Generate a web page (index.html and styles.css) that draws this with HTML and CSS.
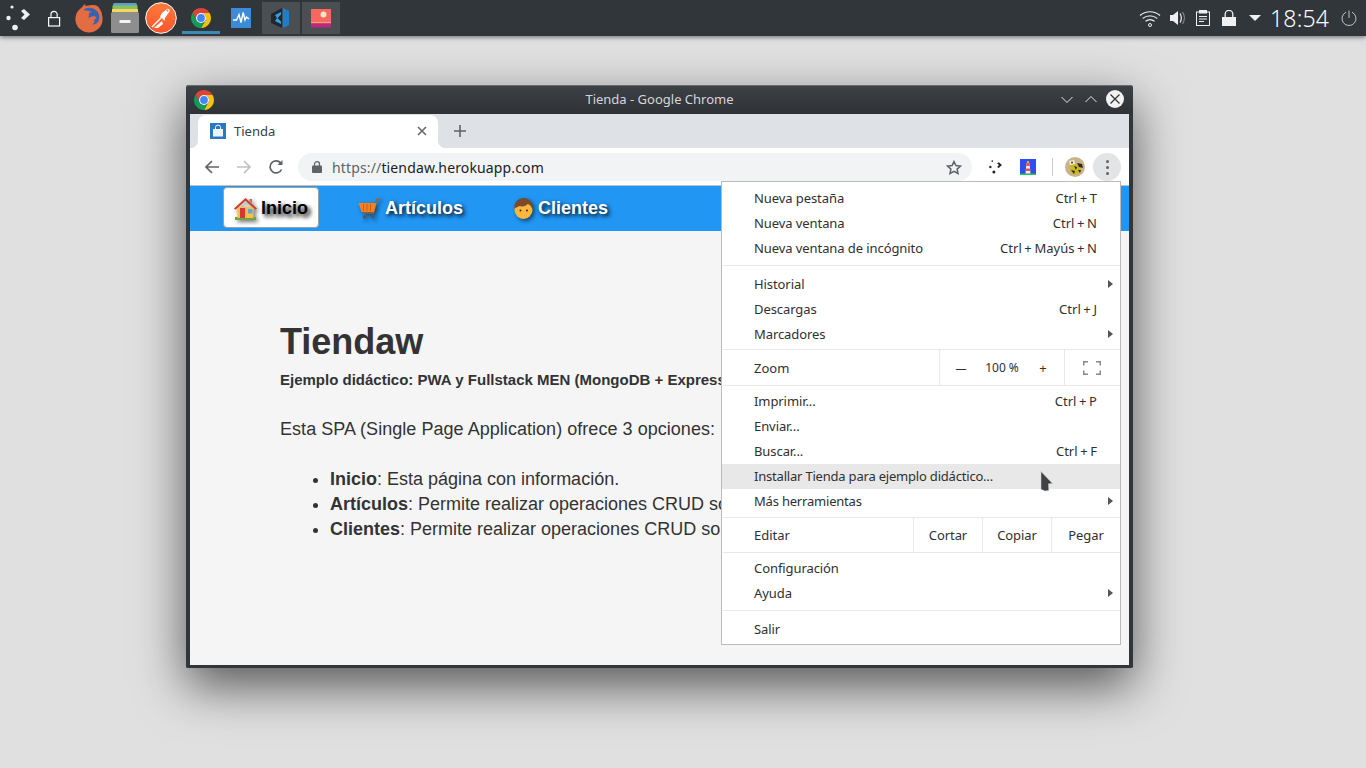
FILE: index.html
```html
<!DOCTYPE html>
<html lang="es">
<head>
<meta charset="utf-8">
<title>Tienda - Google Chrome</title>
<link rel="stylesheet" href="styles.css">
</head>
<body>
<svg class="defs" width="0" height="0" aria-hidden="true">
  <symbol id="chrome" viewBox="0 0 20 20">
    <path fill="#db4437" d="M1.34 5A10 10 0 0 1 18.66 5H10A5 5 0 0 0 5.67 12.5Z"/>
    <path fill="#f4c20d" d="M18.66 5A10 10 0 0 1 10 20L14.33 12.5A5 5 0 0 0 10 5Z"/>
    <path fill="#0f9d58" d="M10 20A10 10 0 0 1 1.34 5L5.67 12.5A5 5 0 0 0 14.33 12.5Z"/>
    <circle cx="10" cy="10" r="5" fill="#fff"/>
    <circle cx="10" cy="10" r="3.9" fill="#4285f4"/>
  </symbol>
  <symbol id="dots" viewBox="0 0 24 26">
    <circle cx="6" cy="2" r="1.600"/>
    <circle cx="2.500" cy="13" r="2.200"/>
    <circle cx="9" cy="22.500" r="2.800"/>
    <path d="M15 6l3-2 6 5.500-6 5.500-3-2 3.500-3.500z"/>
  </symbol>
</svg>

<header class="panel">
  <span class="launcher"><svg width="24" height="26" fill="#eff0f1"><use href="#dots"/></svg></span>
  <span class="slot s36"><svg width="14" height="17" viewBox="0 0 14 17" fill="none" stroke="#fcfcfc" stroke-width="1.2"><rect x="1.6" y="7.6" width="11" height="8.4"/><path d="M4 7.5V4.5a3 3 0 0 1 6.2 0V7.5"/></svg></span>
  <span class="slot s34"><svg width="30" height="30" viewBox="0 0 30 30">
    <circle cx="15" cy="16" r="13.6" fill="#e46c42"/>
    <path fill="#e46c42" d="M7 6C9 3 10 1.500 11 1c0 2 1 3 2 3 2-2 7-3 11-.5 2 2 3.500 5 4 8L17 8z"/>
    <path fill="#3b62ad" d="M9.500 7C13 3.500 19 4 23 8c2 2.500 3 6 2 9-1 3-4 5-7 4.500 1.500-1 3-3 2.200-5-2 .5-4 .8-5.700-.4-1-.8-.7-1.800.2-2.300L15 11.500c-.6-1.600 1-2 2.500-2.500-2-1.200-5.500-1.200-8 -2z"/>
    <path fill="#e46c42" d="M18 13.500c1.800-.4 3.500-.2 4.400 1-1 2.200-3.600 3-6 2.400-1.800-.5-3-1.600-3.400-3 1.600 1 3.500.7 5-.4z"/>
  </svg></span>
  <span class="slot s38"><svg width="28" height="30" viewBox="0 0 28 30">
    <rect x="2" y="0" width="24" height="5" rx="1.500" fill="#5a9fd0"/>
    <rect x="1.500" y="2.500" width="25" height="4" fill="#8cc05a"/>
    <rect x="1" y="6" width="26" height="6" fill="#f3d664"/>
    <rect x="0" y="9" width="28" height="21" rx="1.500" fill="#8e8e8e"/>
    <rect x="8.500" y="17" width="11" height="3" rx=".5" fill="#f2f2f2"/>
  </svg></span>
  <span class="slot s34"><svg width="32" height="32" viewBox="0 0 32 32">
    <defs><linearGradient id="pm" x1="0" y1="0" x2="0" y2="1"><stop offset="0" stop-color="#ff7a3c"/><stop offset="1" stop-color="#f9562a"/></linearGradient></defs>
    <circle cx="16" cy="16" r="15.300" fill="url(#pm)" stroke="#fff" stroke-width="1"/>
    <path d="M7 25L18 14" stroke="#fff" stroke-width="1.500" fill="none"/>
    <path d="M9 26l8-7 1 3-5 4z" fill="#fff"/>
    <path d="M17 11l5-4c1.500-1 3.500 1 2.500 2.500L20 16l-.5 3-2-2.500-2.500-2z" fill="#fff"/>
    <circle cx="22.500" cy="8.500" r="1" fill="#ff6c37"/>
  </svg></span>
  <span class="task current"><svg width="20" height="20"><use href="#chrome"/></svg></span>
  <span class="task"><svg width="20" height="20" viewBox="0 0 20 20"><rect width="20" height="20" fill="#3f8ad8"/><path d="M2 12h3.500L8 6.500l2 8 2.200-10L14 12l1.500-3 2.500 2" fill="none" stroke="#fff" stroke-width="1.400"/></svg></span>
  <span class="task open"><svg width="20" height="20" viewBox="0 0 20 20"><path fill="#23272b" d="M0 6L11 0v20L0 15z"/><path fill="#1b7fcf" d="M12 0l6 3v14l-6 3z"/><path fill="#2ea2e8" d="M4 7l6-3v2.500L6.500 10l3.500 3.500V16l-6-3 2-3z"/></svg></span>
  <span class="task open"><svg width="20" height="20" viewBox="0 0 20 20"><rect width="20" height="13" y="1" fill="#f9675f"/><circle cx="12.500" cy="6.500" r="3" fill="#fde3c8"/><rect y="14" width="20" height="1.500" fill="#f7a27a"/><rect y="15.500" width="20" height="4" fill="#c2247f"/></svg></span>
  <div class="tray">
    <svg class="t-wifi" width="22" height="17" viewBox="0 0 22 17" fill="none" stroke="#eff0f1" stroke-width="1.200"><path d="M1 5.500c5.500-5 14.500-5 20 0"/><path d="M3.700 8.500c4-3.500 10.600-3.500 14.600 0" opacity=".85"/><path d="M6.500 11.300c2.600-2 6.400-2 9 0"/><circle cx="11" cy="15" r="1.500" stroke-width="1"/></svg>
    <svg class="t-vol" width="16" height="16" viewBox="0 0 16 16"><path fill="#eff0f1" d="M0 5h3l5-4v14l-5-4H0z"/><path d="M10 3.500c1.800 2.500 1.800 6.500 0 9" stroke="#eff0f1" fill="none" stroke-width="1.200"/><path d="M12.500 2c2.400 3.500 2.400 8.500 0 12" stroke="#8a8d90" fill="none" stroke-width="1.200"/></svg>
    <svg class="t-clip" width="14" height="16" viewBox="0 0 14 16" fill="none" stroke="#eff0f1"><rect x=".5" y="2" width="13" height="13.500"/><rect x="3" y="0" width="8" height="3.500" fill="#eff0f1" stroke="none"/><path d="M3 6.500h8M3 9h8M3 11.500h5"/></svg>
    <svg class="t-lock" width="14" height="16" viewBox="0 0 14 16"><rect x="0" y="7" width="14" height="9.500" fill="#eff0f1"/><path d="M3.200 7V4.200a3.800 3.800 0 0 1 7.600 0V7" fill="none" stroke="#eff0f1" stroke-width="1.300"/></svg>
    <svg class="t-arrow" width="12" height="6" viewBox="0 0 12 6"><path fill="#eff0f1" d="M0 0h12L6 6z"/></svg>
    <span class="clock">18:54</span>
    <svg class="t-power" width="16" height="16" viewBox="0 0 16 16" fill="none" stroke="#bfc1c3" stroke-width="1"><path d="M5 2.200a7 7 0 1 0 6 0"/><path d="M8 .5V8"/></svg>
  </div>
</header>

<section class="window">
  <div class="titlebar">
    <svg class="title-logo" width="20" height="20"><use href="#chrome"/></svg>
    <span class="title-text">Tienda - Google Chrome</span>
    <div class="title-buttons">
      <svg width="12" height="7" viewBox="0 0 12 7" fill="none" stroke="#e8e8e8" stroke-width="1"><path d="M.5 1l5.500 5.500L11.500 1"/></svg>
      <svg class="btn-up" width="12" height="7" viewBox="0 0 12 7" fill="none" stroke="#e8e8e8" stroke-width="1"><path d="M.5 6L6 .5 11.500 6"/></svg>
      <svg width="18" height="18" viewBox="0 0 18 18"><circle cx="9" cy="9" r="9" fill="#f2f2f2"/><path d="M4.500 4.500l9 9M13.500 4.500l-9 9" stroke="#31363b" stroke-width="1.300"/></svg>
    </div>
  </div>
  <div class="tabstrip">
    <div class="tab">
      <svg class="favicon" width="16" height="16" viewBox="0 0 16 16"><rect width="16" height="16" fill="#2a78c4"/><path fill="#fff" d="M3 6h10v7.500H3z" opacity=".92"/><path d="M5.500 6V4.500a2.500 2.500 0 0 1 5 0V6" fill="none" stroke="#fff" stroke-width="1"/></svg>
      <span class="tab-title">Tienda</span>
      <svg class="tab-close" width="10" height="10" viewBox="0 0 10 10"><path d="M1 1l8 8M9 1L1 9" stroke="#5f6368" stroke-width="1.500"/></svg>
    </div>
    <svg class="newtab" width="12" height="12" viewBox="0 0 12 12"><path d="M6 0v12M0 6h12" stroke="#5f6368" stroke-width="1.600"/></svg>
  </div>
  <div class="toolbar">
    <svg class="nav-btn" width="16" height="16" viewBox="0 0 16 16" fill="none" stroke="#5f6368" stroke-width="1.700"><path d="M15 8H2M8 2L2 8l6 6"/></svg>
    <svg class="nav-btn" width="16" height="16" viewBox="0 0 16 16" fill="none" stroke="#bdc1c6" stroke-width="1.700"><path d="M1 8h13M8 2l6 6-6 6"/></svg>
    <svg class="nav-btn" width="16" height="16" viewBox="0 0 16 16" fill="none" stroke="#5f6368" stroke-width="1.700"><path d="M13.500 10.500A6 6 0 1 1 13 4.500"/><path d="M14.500 1v5h-5" fill="#5f6368" stroke="none"/></svg>
    <div class="omnibox">
      <svg class="omni-lock" width="10" height="12" viewBox="0 0 10 12"><rect y="4.500" width="10" height="7.500" rx="1" fill="#5f6368"/><path d="M2.500 5V3.200a2.500 2.500 0 0 1 5 0V5" fill="none" stroke="#5f6368" stroke-width="1.200"/></svg>
      <span class="url"><span class="url-scheme">https://</span>tiendaw.herokuapp.com</span>
      <svg class="star" width="16" height="15" viewBox="0 0 16 15" fill="none" stroke="#5f6368" stroke-width="1.500"><path d="M8 1.500l1.900 4.100 4.500.5-3.300 3 .9 4.400L8 11.300l-4 2.200.9-4.400-3.300-3 4.500-.5z"/></svg>
    </div>
    <div class="extensions">
      <svg class="ext-kde" width="13" height="14" viewBox="0 0 24 26" fill="#202326"><use href="#dots"/></svg>
      <svg class="ext-light" width="16" height="16" viewBox="0 0 16 16"><rect width="16" height="16" fill="#2f4df0"/><rect y="14.500" width="16" height="1.500" fill="#1fc85a"/><path fill="#f4f0e0" d="M6.500 4h3l1 10.500h-5z"/><path fill="#e8553e" d="M6.500 4h3l.3 3H6.200zM5.900 9.500h4.200l.3 2.500H5.600z"/><rect x="7" y="2" width="2" height="2" fill="#f4a33e"/></svg>
      <span class="ext-sep"></span>
      <svg class="avatar" width="20" height="20" viewBox="0 0 20 20"><circle cx="10" cy="10" r="10" fill="#c9b48a"/><path fill="#cdb81f" d="M5 6l6 1 5 4-1 5-6 2-4-4z"/><path fill="#2a2a22" d="M12 6l5 1 1 4-4-1zM6 13l4 1-1 3zM13 13l3 0-1 3zM9 9l3 1-1 3z"/><path fill="#f1ede0" d="M4 4l5-1 1 4-5 1z"/><circle cx="7" cy="5.500" r="1" fill="#3a3a30"/></svg>
      <span class="kebab"><i></i><i></i><i></i></span>
    </div>
  </div>
  <div class="page">
    <nav class="site-nav">
      <a class="nav-link active">
        <svg class="emoji" width="23" height="22" viewBox="0 0 23 22"><path fill="#6ea544" d="M1 19h21v3H1z"/><path fill="#f7c04a" d="M3.500 9h16v11h-16z"/><path fill="#d33a2c" d="M11.500 0L23 10.500l-1.500 1.200-10-9-10 9L0 10.500z"/><path fill="#d33a2c" d="M6 10h5v10H6z"/><path fill="#5aa9e6" d="M14 11h4.500v4.500H14z"/><path fill="#a77d55" d="M15.500 1h2.500v4l-2.500-2z"/></svg>
        <span>Inicio</span>
      </a>
      <a class="nav-link">
        <svg class="emoji" width="23" height="22" viewBox="0 0 22 22"><path d="M22 1l-4 .8L15 15H5" fill="none" stroke="#a06030" stroke-width="1.500"/><path fill="#f4801f" d="M0 5h18l-2.500 9H3z"/><path d="M5 6v7M8.500 6v7M12 6v7" stroke="#c95f10" stroke-width="1"/><circle cx="6" cy="19" r="1.800" fill="#556"/><circle cx="14" cy="19" r="1.800" fill="#556"/></svg>
        <span>Artículos</span>
      </a>
      <a class="nav-link">
        <svg class="emoji" width="21" height="22" viewBox="0 0 20 22"><circle cx="10" cy="12" r="9" fill="#fbb63f"/><path fill="#7a4a2a" d="M1 11C0 4 5 0 10 0s10 4 9 11c-1-2-3-5-5-5-1 2-5 3-8 2-1 1-4 1-5 3z"/><circle cx="7" cy="12.500" r="1" fill="#3b2a1a"/><circle cx="13.500" cy="12.500" r="1" fill="#3b2a1a"/></svg>
        <span>Clientes</span>
      </a>
    </nav>
    <main class="content">
      <h1>Tiendaw</h1>
      <p class="lead">Ejemplo didáctico: PWA y Fullstack MEN (MongoDB + Express</p>
      <p class="intro">Esta SPA (Single Page Application) ofrece 3 opciones:</p>
      <ul>
        <li><strong>Inicio</strong>: Esta página con información.</li>
        <li><strong>Artículos</strong>: Permite realizar operaciones CRUD so</li>
        <li><strong>Clientes</strong>: Permite realizar operaciones CRUD so</li>
      </ul>
    </main>
  </div>
</section>

<div class="menu">
  <div class="row"><span>Nueva pestaña</span><kbd>Ctrl + T</kbd></div>
  <div class="row"><span>Nueva ventana</span><kbd>Ctrl + N</kbd></div>
  <div class="row"><span>Nueva ventana de incógnito</span><kbd>Ctrl + Mayús + N</kbd></div>
  <hr class="sep sep-a">
  <div class="row sub"><span>Historial</span></div>
  <div class="row"><span>Descargas</span><kbd>Ctrl + J</kbd></div>
  <div class="row sub"><span>Marcadores</span></div>
  <hr class="sep sep-b">
  <div class="tool-row zoom-row">
    <span class="tool-label">Zoom</span>
    <div class="zoom-box"><span class="zoom-minus">—</span><span class="zoom-val">100 %</span><span class="zoom-plus">+</span></div>
    <div class="fullscreen"><svg width="18" height="14" viewBox="0 0 18 14" fill="none" stroke="#888" stroke-width="1.500"><path d="M.7 4.500V.7h4.300M13 .7h4.300v3.800M17.300 9.500v3.800H13M5 13.300H.7V9.500"/></svg></div>
  </div>
  <hr class="sep sep-c">
  <div class="row"><span>Imprimir...</span><kbd>Ctrl + P</kbd></div>
  <div class="row"><span>Enviar...</span></div>
  <div class="row"><span>Buscar...</span><kbd>Ctrl + F</kbd></div>
  <div class="row hover tight"><span>Installar Tienda para ejemplo didáctico...</span></div>
  <div class="row sub tight"><span>Más herramientas</span></div>
  <hr class="sep sep-d">
  <div class="tool-row edit-row">
    <span class="tool-label">Editar</span>
    <button>Cortar</button><button>Copiar</button><button>Pegar</button>
  </div>
  <hr class="sep sep-c">
  <div class="row"><span>Configuración</span></div>
  <div class="row sub"><span>Ayuda</span></div>
  <hr class="sep sep-a">
  <div class="row"><span>Salir</span></div>
</div>

<svg class="cursor" width="13" height="21" viewBox="0 0 13 21"><path fill="#3f4245" stroke="#cfcfcf" stroke-width=".5" d="M1 .5L12.500 12.500 8.500 12.800 8.800 19.500 5 20 1 18.200z"/></svg>
</body>
</html>
```

FILE: styles.css
```css
* { box-sizing: border-box; }
html, body { margin: 0; height: 100%; }
body {
  position: relative;
  width: 1366px;
  height: 768px;
  overflow: hidden;
  background: #e0e0e0;
  font-family: "Noto Sans", sans-serif;
}
.defs { position: absolute; }

/* Panel */
.panel {
  display: flex;
  align-items: flex-start;
  height: 36px;
  background: #31363b;
  box-shadow: 0 1px 5px rgba(0,0,0,.55);
}
.panel > span { display: flex; align-items: center; justify-content: center; height: 36px; }
.launcher { width: 36px; }
.s36 { width: 36px; }
.s34 { width: 34px; }
.s38 { width: 38px; }
.panel > .task { width: 38px; height: 32px; margin-top: 2px; margin-right: 2px; }
.panel > .task.current { margin-left: 4px; box-shadow: inset 0 -3px 0 #3c8bb4; }
.panel > .task.open { background: #4a4f54; }
.tray { display: flex; align-items: center; height: 36px; margin-left: auto; }
.t-wifi { margin-right: 9px; }
.t-vol { margin-right: 10px; }
.t-clip { margin-right: 12px; }
.t-lock { margin-right: 13px; }
.t-arrow { margin-right: 9px; }
.clock { font-size: 23px; font-weight: 300; letter-spacing: .2px; color: #fcfcfc; width: 59px; white-space: nowrap; margin-right: 12px; line-height: 36px; }
.t-power { margin-right: 9px; }

/* Window */
.window {
  position: absolute;
  left: 186px;
  top: 85px;
  width: 947px;
  height: 583px;
  display: flex;
  flex-direction: column;
  border: 4px solid #31363b;
  border-top: 0;
  border-bottom-width: 3px;
  border-radius: 3px 3px 2px 2px;
  background: #31363b;
  box-shadow: 0 18px 50px rgba(0,0,0,.62);
}
.titlebar {
  position: relative;
  display: flex;
  align-items: center;
  justify-content: center;
  flex: none;
  height: 29px;
  margin: 0 -4px;
  padding: 0 8px 2px;
  background: linear-gradient(#3c4146, #2f3337);
  border-top: 1px solid #6a6d70;
  border-radius: 3px 3px 0 0;
  color: #d5d6d7;
  font-size: 13px;
}
.title-logo { position: absolute; left: 8px; top: 4px; }
.title-text { line-height: 26px; }
.title-buttons { position: absolute; right: 9px; top: 4px; display: flex; align-items: center; gap: 12px; height: 18px; }
.btn-up { margin-right: -3px; }

.tabstrip {
  display: flex;
  align-items: flex-end;
  flex: none;
  height: 34px;
  padding-left: 8px;
  background: #dee1e6;
}
.tab {
  position: relative;
  display: flex;
  align-items: center;
  width: 240px;
  height: 33px;
  padding: 0 12px 1px;
  background: #fff;
  border-radius: 8px 8px 0 0;
}
.tab::before, .tab::after {
  content: "";
  position: absolute;
  bottom: 0;
  width: 8px;
  height: 8px;
}
.tab::before { left: -8px; background: radial-gradient(circle at 0 0, transparent 8px, #fff 8.5px); }
.tab::after { right: -8px; background: radial-gradient(circle at 100% 0, transparent 8px, #fff 8.5px); }
.favicon { flex: none; margin-right: 8px; }
.tab-title { font-size: 13px; color: #3c4043; }
.tab-close { margin-left: auto; margin-right: -1px; }
.newtab { margin: 0 0 11px 16px; }

.toolbar {
  display: flex;
  align-items: center;
  flex: none;
  height: 38px;
  padding: 1px 8px 0 0;
  background: #fff;
  border-bottom: 1px solid #bfc1c4;
}
.nav-btn { flex: none; margin-left: 14px; margin-right: 2px; }
.nav-btn:first-child { margin-left: 14px; }
.omnibox {
  display: flex;
  align-items: center;
  width: 674px;
  height: 28px;
  margin-left: 12px;
  padding: 0 10px 0 14px;
  border-radius: 14px;
  background: #f1f3f4;
  font-size: 14px;
  color: #202124;
}
.omni-lock { flex: none; margin-right: 10px; }
.url { white-space: nowrap; font-size: 14px; letter-spacing: .14px; }
.url-scheme { color: #5f6368; }
.star { margin-left: auto; }
.extensions { display: flex; align-items: center; margin-left: auto; }
.ext-kde { margin-right: 18px; }
.ext-light { margin-right: 16px; }
.ext-sep { width: 1px; height: 18px; background: #c8cacc; margin-right: 12px; }
.avatar { margin-right: 8px; }
.kebab {
  display: flex;
  flex-direction: column;
  align-items: center;
  justify-content: center;
  gap: 3px;
  width: 28px;
  height: 28px;
  border-radius: 50%;
  background: #e3e4e5;
}
.kebab i { width: 3px; height: 3px; border-radius: 50%; background: #5f6368; }

.page { flex: 1; min-height: 0; display: flex; flex-direction: column; background: #f5f5f5; font-family: "Liberation Sans", Arial, sans-serif; color: #333; overflow: hidden; }
.site-nav {
  display: flex;
  align-items: center;
  flex: none;
  gap: 28px;
  height: 45px;
  padding: 0 0 0 33px;
  background: #2196f3;
}
.nav-link {
  display: flex;
  align-items: center;
  gap: 4px;
  height: 41px;
  padding: 0 11px;
  color: #fff;
  font-size: 18px;
  font-weight: 700;
  text-shadow: 2px 2px 4px #000;
  white-space: nowrap;
}
.nav-link.active {
  color: #000;
  background: #fff;
  border: 1px solid #9aa0a6;
  border-radius: 4px;
  margin-bottom: 2px;
  padding: 2px 10px 0;
  text-shadow: 3px 3px 4px #000;
}
.emoji { flex: none; filter: drop-shadow(2px 2px 2px rgba(0,0,0,.55)); }

.content { width: 531px; padding: 0 0 0 90px; }
h1 { margin: 90px 0 0; font-size: 36px; line-height: 42px; font-weight: 700; color: #333; }
.lead { margin: 7px 0 0; font-size: 15px; line-height: 20px; font-weight: 700; white-space: nowrap; }
.intro { margin: 27px 0 0; font-size: 18px; line-height: 25px; white-space: nowrap; letter-spacing: .04px; }
ul { margin: 25px 0 0; padding-left: 50px; font-size: 18px; line-height: 25px; white-space: nowrap; }

/* Menu */
.menu {
  position: absolute;
  left: 721px;
  top: 181px;
  width: 400px;
  height: 464px;
  padding-top: 4px;
  background: #fff;
  border: 1px solid #bbb;
  color: #303030;
  font-size: 13px;
}
.row {
  position: relative;
  display: flex;
  align-items: center;
  justify-content: space-between;
  height: 25px;
  padding: 0 23px 2px 32px;
  letter-spacing: -.08px;
}
.row.tight { letter-spacing: -.2px; }
.row.hover { background: #e8e8e8; }
kbd { font: inherit; letter-spacing: 0; word-spacing: -.75px; }
.row.sub::after {
  content: "";
  position: absolute;
  right: 7px;
  top: 8px;
  border-left: 5px solid #555;
  border-top: 4.5px solid transparent;
  border-bottom: 4.5px solid transparent;
}
.sep { height: 1px; margin: 0 0 0 1px; border: 0; background: #e9e9e9; }
.sep-a { margin-top: 4px; margin-bottom: 6px; }
.sep-b { margin-top: 2px; }
.sep-c { margin-bottom: 3px; }
.sep-d { margin-top: 3px; }
.tool-row { display: flex; align-items: stretch; }
.zoom-row { height: 35px; }
.edit-row { height: 34px; }
.tool-label { display: flex; align-items: center; padding-left: 32px; flex: 1; }
.zoom-box { display: flex; align-items: center; width: 126px; border-left: 1px solid #e9e9e9; border-right: 1px solid #e9e9e9; }
.zoom-minus { width: 42px; text-align: center; font-size: 11px; }
.zoom-val { width: 40px; text-align: center; font-size: 12px; white-space: nowrap; }
.zoom-plus { width: 42px; text-align: center; }
.fullscreen { display: flex; align-items: center; justify-content: center; width: 55px; padding-right: 2px; }
.edit-row button {
  width: 69px;
  padding: 0;
  border: 0;
  border-left: 1px solid #e9e9e9;
  background: transparent;
  color: inherit;
  font: inherit;
  letter-spacing: -.08px;
}

.cursor { position: absolute; left: 1040px; top: 471px; }
```
